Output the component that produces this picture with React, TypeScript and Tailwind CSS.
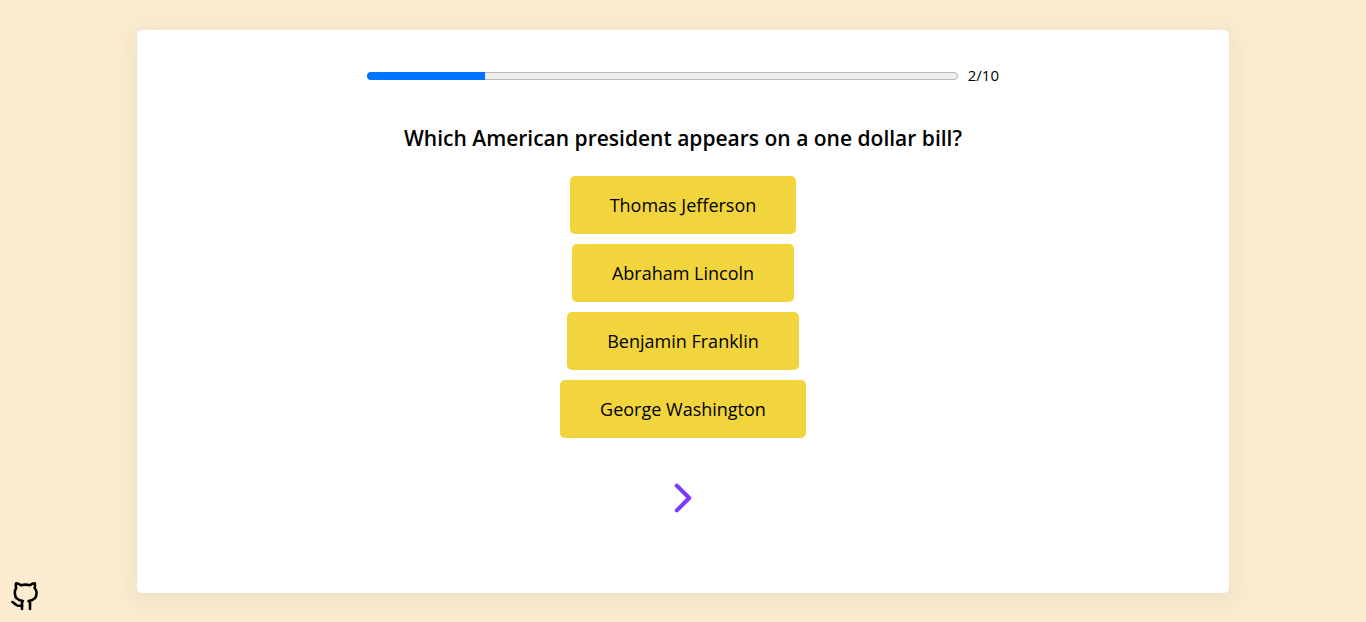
const answers = [
  'Thomas Jefferson',
  'Abraham Lincoln',
  'Benjamin Franklin',
  'George Washington',
];

function GithubIcon() {
  return (
    <svg viewBox="0 0 30 32" className="h-8 w-[30px]" fill="none" stroke="currentColor" strokeWidth="2.6" strokeLinecap="round" strokeLinejoin="round" aria-hidden="true">
      <path d="M12 29V22.3L13 21C8.500 20.500 4.800 18.500 4.800 12.700C4.800 10.700 5.300 9.200 6.200 8C5.600 6.300 5.600 4.800 6 3.300C7.700 3.300 9.200 3.900 10.900 5.200C13.800 4.500 17 4.500 19.900 5.200C21.600 3.900 23.100 3.300 24.800 3.300C25.200 4.800 25.200 6.300 24.600 8C25.700 9.300 26.600 10.800 26.600 12.700C26.600 18.500 23 20.500 18.500 21L20 22.300V29" />
      <path d="M2.400 22C4.500 22.500 5.300 25.600 8.200 25.800L12 25.800" />
    </svg>
  );
}

function NextIcon() {
  return (
    <svg viewBox="0 0 512 512" className="size-11" fill="none" stroke="currentColor" strokeWidth="48" strokeLinecap="round" strokeLinejoin="round" aria-hidden="true">
      <path d="M184 112l144 144-144 144" />
    </svg>
  );
}

export default function App() {
  return (
    <div className="flex min-h-screen items-center justify-center bg-[#fcedd0] py-7 font-['Open_Sans',sans-serif] text-black">
      <main className="flex w-4/5 flex-col items-center rounded-[5px] bg-white px-6 pt-9 pb-[73px] shadow-[0_5px_20px_10px_#f1e4c9]">
        <div className="flex h-5 w-full max-w-[632px] items-center gap-2.5">
          <progress
            className="h-2 min-w-0 flex-1 appearance-none overflow-hidden rounded-full [&::-webkit-progress-bar]:rounded-full [&::-webkit-progress-bar]:bg-[#efefef] [&::-webkit-progress-bar]:shadow-[inset_0_0_0_1px_#b8b8b8] [&::-webkit-progress-value]:bg-[#0075ff] [&::-moz-progress-bar]:bg-[#0075ff]"
            value={2}
            max={10}
            aria-label="Quiz progress"
          />
          <span className="text-[15px]">2/10</span>
        </div>
        <h1 className="mt-[38px] text-center text-[21px] leading-7 font-semibold">
          Which American president appears on a one dollar bill?
        </h1>
        <div className="mt-6 flex flex-col items-center gap-2.5">
          {answers.map((answer) => (
            <button key={answer} type="button" className="h-[58px] rounded-[5px] bg-[#f2d53c] px-10 text-lg">
              {answer}
            </button>
          ))}
        </div>
        <button type="button" aria-label="Next question" className="mt-[38px] text-[#7c3aff]">
          <NextIcon />
        </button>
      </main>
      <a href="https://github.com" aria-label="GitHub" className="fixed bottom-2.5 left-2.5">
        <GithubIcon />
      </a>
    </div>
  );
}
